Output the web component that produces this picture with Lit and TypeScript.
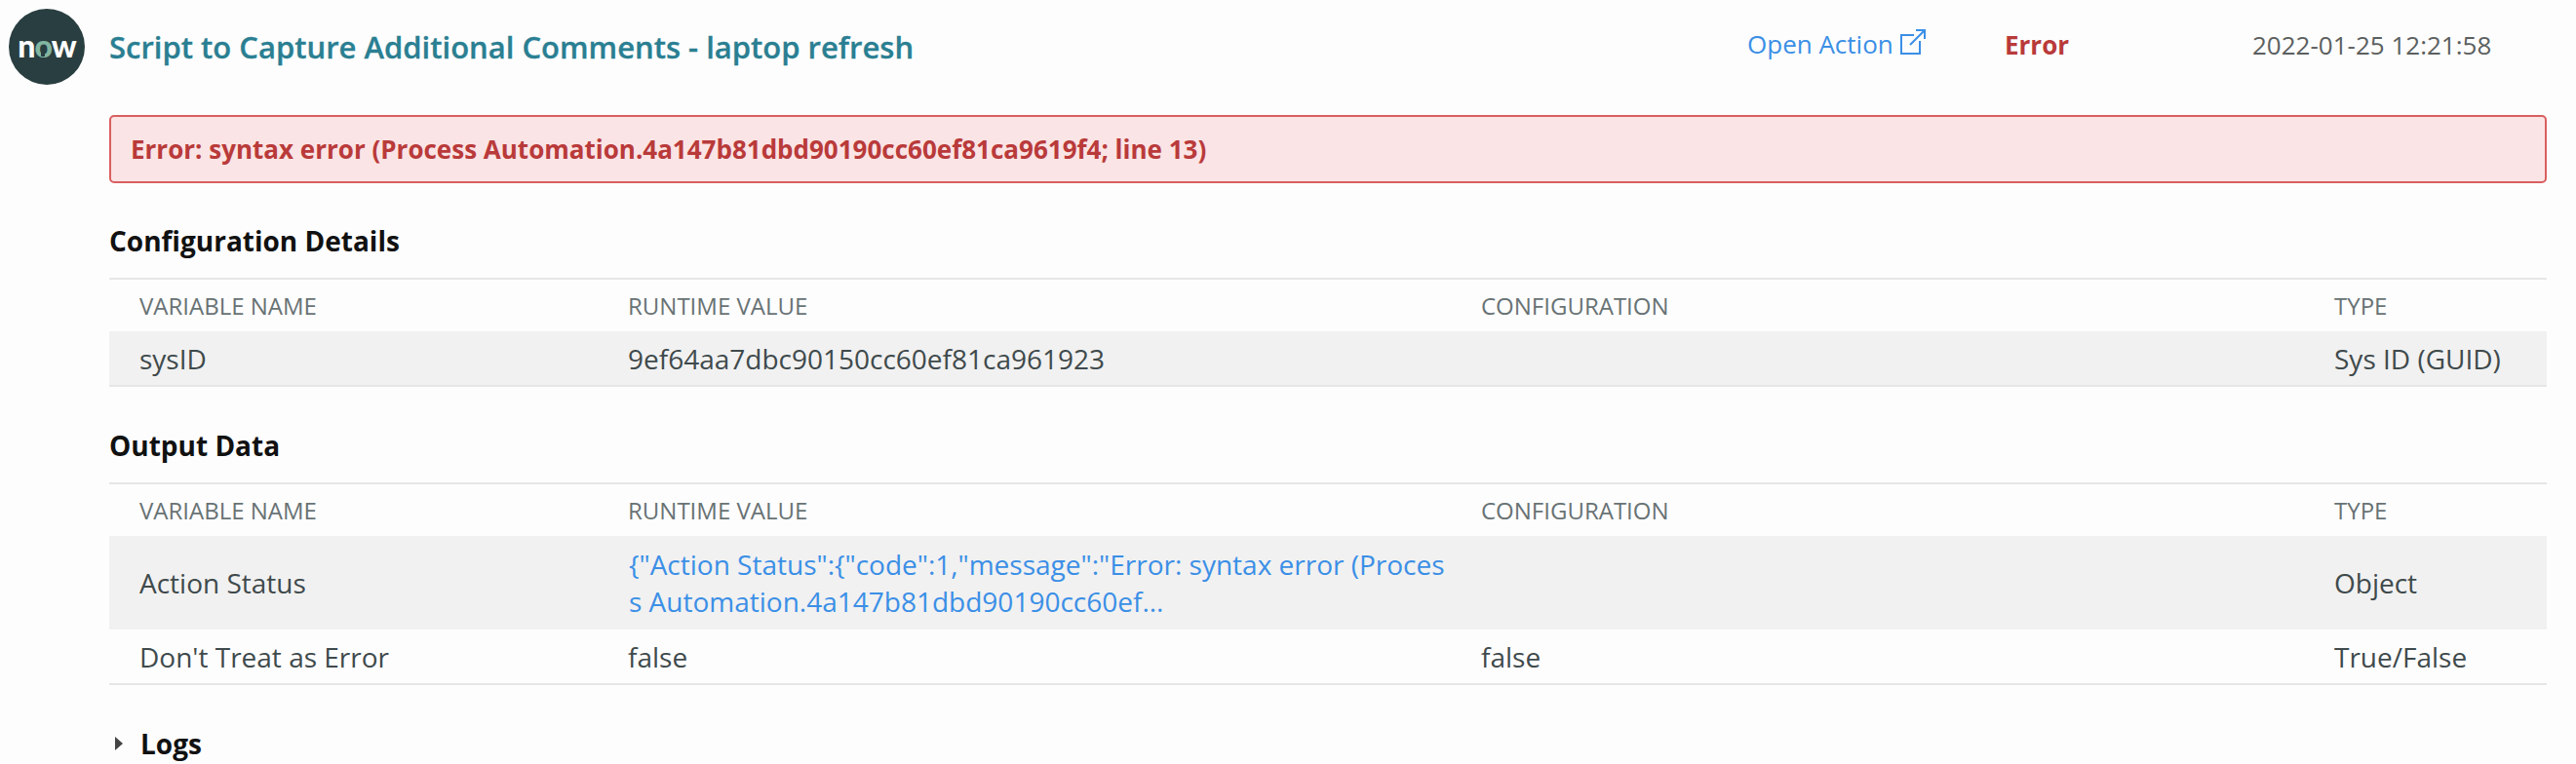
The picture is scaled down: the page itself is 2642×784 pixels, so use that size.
import { LitElement, html, css } from "lit";
import { customElement } from "lit/decorators.js";

interface Row { name: string; value: string; config: string; type: string; link?: boolean; shaded?: boolean; }

@customElement("app-root")
export class AppRoot extends LitElement {
  static styles = css`
    :host { display: block; width: 2642px; height: 784px; overflow: hidden; background: #fdfdfd; font-family: "Open Sans", sans-serif; color: #3f4a4c; box-sizing: border-box; }
    .page { display: grid; grid-template-columns: 78px 1fr; column-gap: 25px; padding: 9px 30px 0 9px; }
    .logo { width: 78px; height: 78px; border-radius: 50%; background: #293e40; display: flex; align-items: center; justify-content: center; font-family: "Lato", sans-serif; font-weight: 900; font-size: 32px; letter-spacing: -1px; color: #fff; line-height: 1; padding-bottom: 3px; box-sizing: border-box; }
    .logo .o { color: #81b5a1; position: relative; }
    .logo .o::after { content: ""; position: absolute; left: 50%; bottom: 5px; width: 4px; height: 5px; margin-left: -2px; background: #293e40; }
    .main { min-width: 0; }
    .head { display: flex; align-items: center; height: 78px; margin-bottom: 31px; font-size: 26px; }
    .title { flex: 1; font-size: 31px; font-weight: 600; color: #2a7f92; -webkit-text-stroke: 0.3px #2a7f92; }
    .open { width: 264px; color: #3b8fe6; display: flex; align-items: center; gap: 6px; position: relative; top: -3px; }
    .open svg { width: 28px; height: 28px; flex: none; position: relative; top: -2px; }
    .status { width: 254px; font-weight: 700; color: #b93a3a; position: relative; top: -2px; }
    .date { width: 302px; color: #5b5f60; position: relative; top: -2px; }
    .alert { height: 70px; box-sizing: border-box; border: 2px solid #d95f5f; border-radius: 5px; background: #fbe4e5; color: #b93a3a; font-weight: 700; font-size: 26px; display: flex; align-items: center; padding: 0 20px; }
    h2 { margin: 0; font-size: 28px; font-weight: 700; color: #111; line-height: 38px; }
    .cfg-title { margin-top: 40px; margin-bottom: 19px; }
    .out-title { margin-top: 41px; margin-bottom: 19px; }
    .table { border-top: 2px solid #e6e6e6; }
    .row { display: grid; grid-template-columns: 501px 875px 875px 1fr; padding-left: 31px; align-items: center; font-size: 28px; line-height: 38px; color: #3f4a4c; border-bottom: 2px solid #e6e6e6; }
    .row > div { min-width: 0; }
    .row.header { height: 53px; border-bottom: 0; font-size: 24px; color: #687274; }
    .row.plain { height: 55px; box-sizing: content-box; }
    .row.shaded { background: #f1f1f1; }
    .row.no-line { border-bottom: 0; }
    .row.tall { height: 96px; }
    .link { color: #3b8fe6; word-break: break-all; width: 846px; padding-left: 1px; }
    .logs { display: flex; align-items: center; margin-top: 43px; font-size: 28px; font-weight: 700; color: #111; gap: 17px; line-height: 34px; }
    .logs svg { width: 10px; height: 16px; margin-left: 5px; flex: none; }
  `;

  private config: Row[] = [
    { name: "sysID", value: "9ef64aa7dbc90150cc60ef81ca961923", config: "", type: "Sys ID (GUID)", shaded: true },
  ];
  private output: Row[] = [
    { name: "Action Status", value: '{"Action Status":{"code":1,"message":"Error: syntax error (Process Automation.4a147b81dbd90190cc60ef...', config: "", type: "Object", link: true, shaded: true },
    { name: "Don't Treat as Error", value: "false", config: "false", type: "True/False" },
  ];

  private table(rows: Row[]) {
    return html`<div class="table">
      <div class="row header"><div>VARIABLE NAME</div><div>RUNTIME VALUE</div><div>CONFIGURATION</div><div>TYPE</div></div>
      ${rows.map((r) => html`<div class="row ${r.link ? "tall no-line" : "plain"} ${r.shaded ? "shaded" : ""}">
        <div>${r.name}</div>
        <div class="${r.link ? "link" : ""}">${r.value}</div>
        <div>${r.config}</div>
        <div>${r.type}</div>
      </div>`)}
    </div>`;
  }

  render() {
    return html`<div class="page">
      <div class="logo"><span>n</span><span class="o">o</span><span>w</span></div>
      <div class="main">
        <div class="head">
          <div class="title">Script to Capture Additional Comments - laptop refresh</div>
          <div class="open">Open Action
            <svg viewBox="0 0 28 28" fill="none" stroke="#3b8fe6" stroke-width="2">
              <path d="M15 7H2v19h19V13" />
              <path d="M11 17L25.5 2.5M17 2h9v9" />
            </svg>
          </div>
          <div class="status">Error</div>
          <div class="date">2022-01-25 12:21:58</div>
        </div>
        <div class="alert">Error: syntax error (Process Automation.4a147b81dbd90190cc60ef81ca9619f4; line 13)</div>
        <h2 class="cfg-title">Configuration Details</h2>
        ${this.table(this.config)}
        <h2 class="out-title">Output Data</h2>
        ${this.table(this.output)}
        <div class="logs">
          <svg viewBox="0 0 10 16"><path d="M1 1l8 7-8 7z" fill="#444"/></svg>
          <span>Logs</span>
        </div>
      </div>
    </div>`;
  }
}
